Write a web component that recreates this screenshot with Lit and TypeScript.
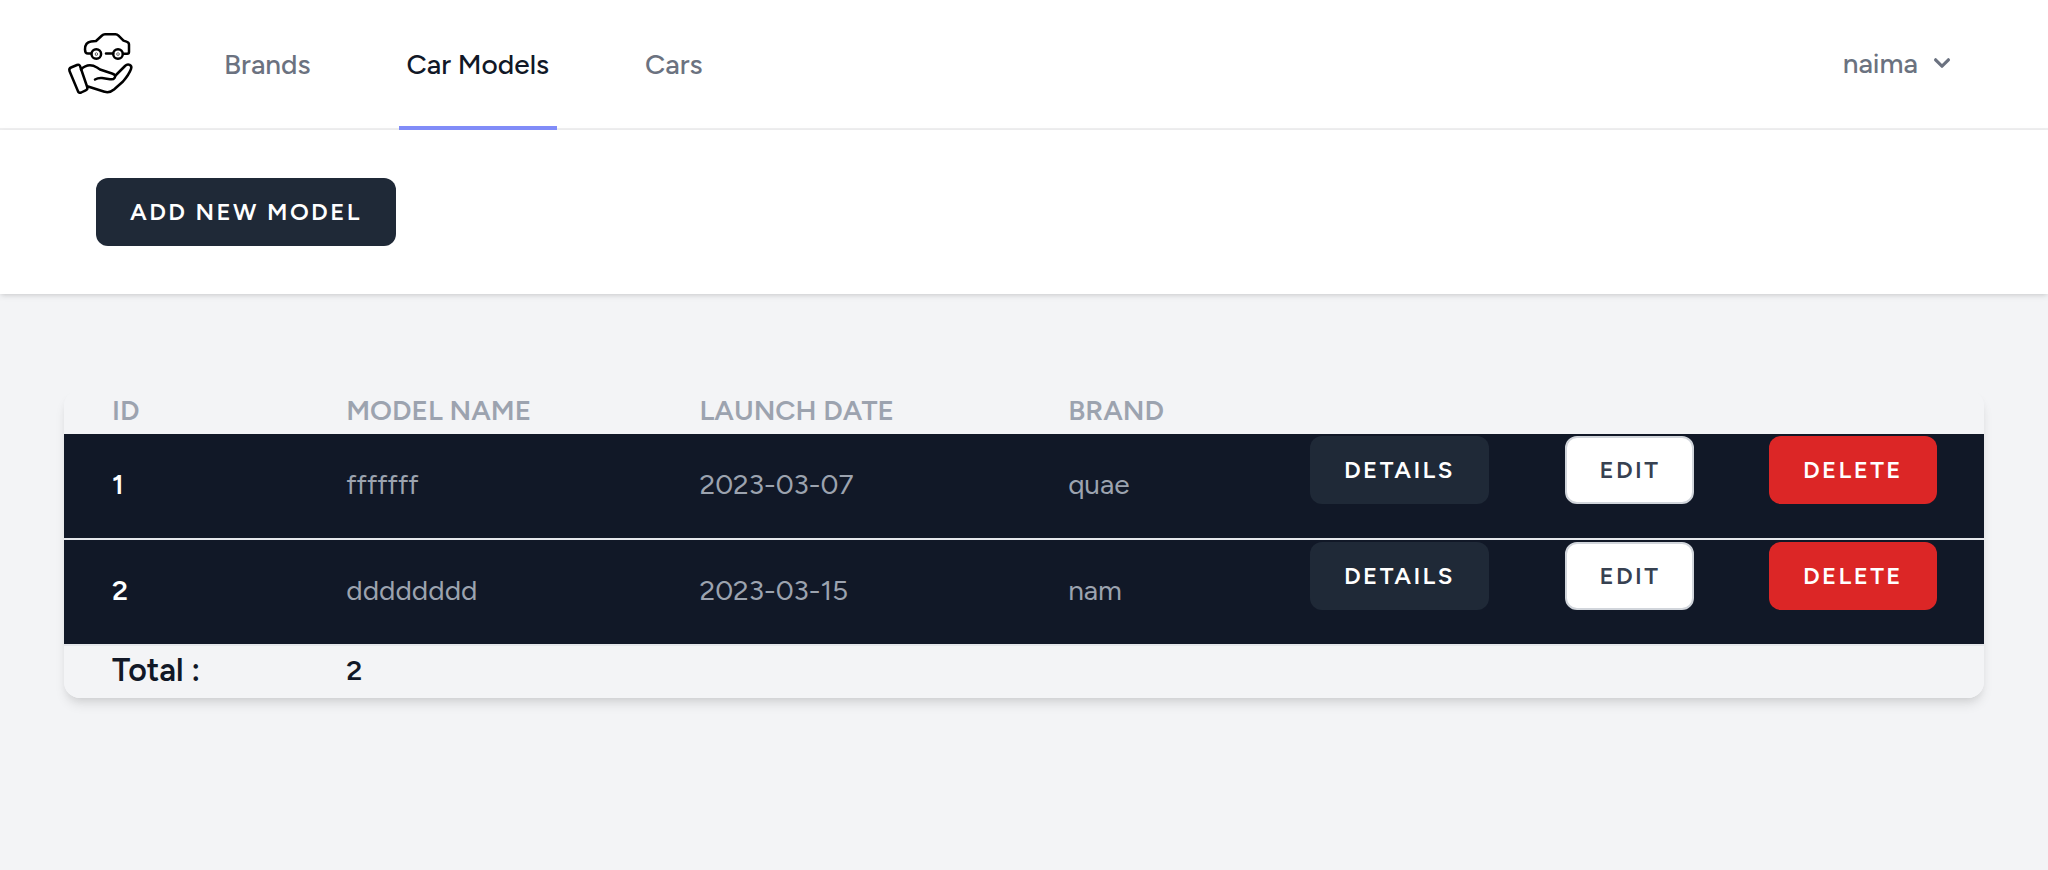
import { LitElement, html, css } from "lit";
import { customElement, state } from "lit/decorators.js";

interface CarModel {
  id: number;
  name: string;
  launched: string;
  brand: string;
}

@customElement("app-root")
export class AppRoot extends LitElement {
  static styles = css`
    :host {
      display: block;
      min-height: 100vh;
      background: #f3f4f6;
      color: #111827;
      font-family: Figtree, Lato, "Open Sans", sans-serif;
      font-size: 28px;
      line-height: 40px;
    }
    * {
      box-sizing: border-box;
    }
    .nav {
      display: flex;
      height: 130px;
      padding: 0 64px;
      background: #fff;
      border-bottom: 2px solid #f0f0f1;
    }
    .logo {
      display: flex;
      align-items: center;
    }
    .logo svg {
      display: block;
      width: 72px;
      height: 72px;
    }
    .links {
      display: flex;
      gap: 80px;
      margin: 0 auto -2px 80px;
    }
    .link {
      display: flex;
      align-items: center;
      padding: 2px 8px 0;
      border-bottom: 4px solid transparent;
      color: #6b7280;
      font-weight: 500;
      text-decoration: none;
    }
    .link.active {
      color: #111827;
      border-color: #818cf8;
    }
    .user {
      display: flex;
      align-items: center;
      gap: 8px;
      padding: 0 26px 2px;
      border: 0;
      background: none;
      color: #6b7280;
      font: inherit;
      font-weight: 500;
    }
    .user svg {
      width: 32px;
      height: 32px;
    }
    .bar {
      padding: 48px 96px;
      background: #fff;
      box-shadow: 0 2px 6px rgb(0 0 0 / 0.1), 0 2px 4px -2px rgb(0 0 0 / 0.1);
    }
    .btn {
      display: block;
      padding: 16px 32px;
      border: 2px solid transparent;
      border-radius: 12px;
      background: #1f2937;
      color: #fff;
      font: inherit;
      font-size: 24px;
      line-height: 32px;
      font-weight: 600;
      letter-spacing: 0.1em;
      text-transform: uppercase;
      white-space: nowrap;
    }
    .btn.light {
      background: #fff;
      border-color: #d1d5db;
      color: #374151;
    }
    .btn.danger {
      background: #dc2626;
    }
    .content {
      padding: 96px 64px;
    }
    .card {
      overflow: hidden;
      border-radius: 16px;
      box-shadow: 0 8px 12px -2px rgb(0 0 0 / 0.1), 0 4px 8px -4px rgb(0 0 0 / 0.1);
    }
    table {
      width: 100%;
      table-layout: fixed;
      border-collapse: separate;
      border-spacing: 0;
      text-align: left;
      background: #f3f4f6;
    }
    th,
    td {
      padding: 0 48px 4px;
    }
    .c1 { width: 12.2%; }
    .c2 { width: 18.4%; }
    .c3 { width: 19.2%; }
    .c4 { width: 12.6%; }
    .c5 { width: 13.3%; }
    .c6 { width: 10.6%; }
    thead th {
      color: #9ca3af;
      font-weight: 600;
      text-transform: uppercase;
      white-space: nowrap;
    }
    tbody tr {
      background: #111827;
      color: #9ca3af;
    }
    tbody th {
      color: #fff;
      font-weight: 600;
    }
    tbody th,
    tbody td {
      height: 106px;
      background: #111827;
      border-bottom: 2px solid #e5e7eb;
    }
    tbody .action {
      padding-top: 2px;
      padding-right: 0;
      vertical-align: top;
    }
    tfoot th,
    tfoot td {
      height: 52px;
      font-weight: 600;
    }
    tfoot th {
      font-size: 32px;
    }
  `;

  @state() private models: CarModel[] = [
    { id: 1, name: "fffffff", launched: "2023-03-07", brand: "quae" },
    { id: 2, name: "dddddddd", launched: "2023-03-15", brand: "nam" },
  ];

  private row(m: CarModel) {
    return html`<tr>
      <th scope="row">${m.id}</th>
      <td>${m.name}</td>
      <td>${m.launched}</td>
      <td>${m.brand}</td>
      <td class="action"><button class="btn" type="button">Details</button></td>
      <td class="action"><button class="btn light" type="button">Edit</button></td>
      <td class="action"><button class="btn danger" type="button">Delete</button></td>
    </tr>`;
  }

  render() {
    return html`
      <nav class="nav">
        <a class="logo" href="#" aria-label="Home">
          <svg viewBox="0 0 72 72" fill="none" stroke="#000" stroke-width="2.5" stroke-linejoin="round" stroke-linecap="round">
            <path d="M27 25.500h-3c-2 0-3-1.500-3-4c0-5 1.500-7.500 6-8l5-.5l6-5.500c1-1 2-1.200 3-1.200h10.500c1 0 2 .3 3 1.300l5 5l3 1c1.700.5 2.500 1.500 2.500 3v7.500c0 1-.6 1.700-1.700 1.700H59" />
            <circle cx="32.300" cy="26" r="4.800" />
            <circle cx="54" cy="26" r="4.800" />
            <circle cx="32.300" cy="26" r=".3" />
            <circle cx="54" cy="26" r=".3" />
            <path d="M42 25.500h7" />
            <path d="M7 39.500l6-2.500c1.500-.6 2.700 0 3.200 1.500l7 20.500c.6 1.600 0 2.700-1.500 3.300l-4.500 2.200c-1.600.6-2.800 0-3.300-1.500L5.500 43c-.5-1.700 0-2.900 1.500-3.500z" />
            <path d="M17 41.500c5-5 10-5.500 16-2l3 2l12 4c3 1 4 2.500 2.500 4.500c-1 1.400-2.500 1.600-4.500 1.200l-8-1.200c-3-.3-5 .3-7 1.500" />
            <path d="M51.500 47.500l9.500-9.500c3-3 7.500-1 6 3c-2 5.500-5 9-8 12.500l-9 8c-3 2.500-6 3.500-9.500 2.200L24 58.500" />
          </svg>
        </a>
        <div class="links">
          <a class="link" href="#brands">Brands</a>
          <a class="link active" href="#models" aria-current="page">Car Models</a>
          <a class="link" href="#cars">Cars</a>
        </div>
        <button class="user" type="button" aria-haspopup="menu">
          naima
          <svg viewBox="0 0 20 20" fill="currentColor" aria-hidden="true">
            <path fill-rule="evenodd" clip-rule="evenodd" d="M5.293 7.293a1 1 0 011.414 0L10 10.586l3.293-3.293a1 1 0 111.414 1.414l-4 4a1 1 0 01-1.414 0l-4-4a1 1 0 010-1.414z" />
          </svg>
        </button>
      </nav>
      <header class="bar">
        <button class="btn" type="button">Add new model</button>
      </header>
      <main class="content">
        <div class="card">
          <table>
            <colgroup>
              <col class="c1" /><col class="c2" /><col class="c3" /><col class="c4" /><col class="c5" /><col class="c6" /><col />
            </colgroup>
            <thead>
              <tr>
                <th scope="col">Id</th>
                <th scope="col">Model name</th>
                <th scope="col">Launch date</th>
                <th scope="col">Brand</th>
                <td></td>
                <td></td>
                <td></td>
              </tr>
            </thead>
            <tbody>
              ${this.models.map((m) => this.row(m))}
            </tbody>
            <tfoot>
              <tr>
                <th scope="row">Total :</th>
                <td>${this.models.length}</td>
                <td colspan="5"></td>
              </tr>
            </tfoot>
          </table>
        </div>
      </main>
    `;
  }
}
